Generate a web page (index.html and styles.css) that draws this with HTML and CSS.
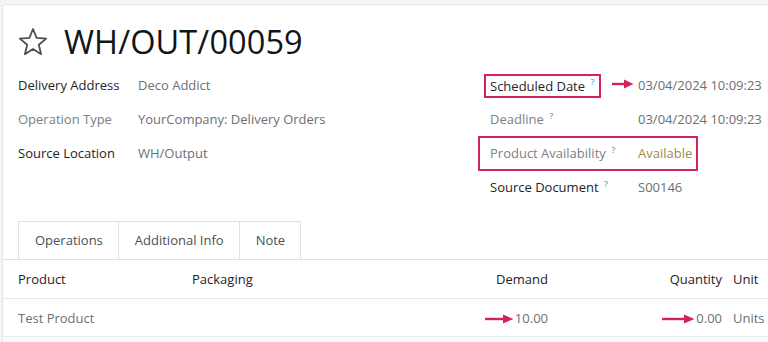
FILE: index.html
```html
<!DOCTYPE html>
<html lang="en">
<head>
    <meta charset="UTF-8">
    <title>WH/OUT/00059</title>
    <link rel="stylesheet" href="styles.css">
</head>
<body>
    <div class="sheet">
        <div class="title-row">
            <svg class="star" width="30" height="29" viewBox="0 0 30 29">
                <path d="M15 2 L18.6 10.9 L28.2 11.6 L20.8 17.8 L23.1 27.2 L15 22.1 L6.9 27.2 L9.2 17.8 L1.8 11.6 L11.4 10.9 Z" fill="none" stroke="#4b5057" stroke-width="1.8" stroke-linejoin="round"/>
            </svg>
            <h1>WH/OUT/00059</h1>
        </div>

        <div class="fields">
            <div class="group left">
                <div class="field">
                    <span class="label">Delivery Address</span>
                    <span class="value">Deco Addict</span>
                </div>
                <div class="field">
                    <span class="label muted">Operation Type</span>
                    <span class="value">YourCompany: Delivery Orders</span>
                </div>
                <div class="field">
                    <span class="label">Source Location</span>
                    <span class="value">WH/Output</span>
                </div>
            </div>
            <div class="group right">
                <div class="field">
                    <span class="label"><span class="boxed">Scheduled Date <sup>?</sup></span></span>
                    <span class="value arrowed">
                        <svg class="arrow side" width="22" height="10" viewBox="0 0 22 10"><path d="M0 5 H14" stroke="#d1245f" stroke-width="2.4"/><path d="M12 0.5 L21.5 5 L12 9.5 Z" fill="#d1245f"/></svg>
                        03/04/2024 10:09:23
                    </span>
                </div>
                <div class="field">
                    <span class="label muted">Deadline <sup>?</sup></span>
                    <span class="value">03/04/2024 10:09:23</span>
                </div>
                <div class="field marked">
                    <span class="label muted">Product Availability <sup>?</sup></span>
                    <span class="value gold">Available</span>
                </div>
                <div class="field">
                    <span class="label">Source Document <sup>?</sup></span>
                    <span class="value">S00146</span>
                </div>
            </div>
        </div>

        <div class="tabs">
            <div class="tab active">Operations</div>
            <div class="tab">Additional Info</div>
            <div class="tab">Note</div>
        </div>

        <table class="moves">
            <colgroup>
                <col style="width: 181px">
                <col style="width: 256px">
                <col style="width: 116px">
                <col style="width: 171px">
                <col style="width: 60px">
            </colgroup>
            <thead>
                <tr>
                    <th class="first">Product</th>
                    <th>Packaging</th>
                    <th class="num">Demand</th>
                    <th class="num qty">Quantity</th>
                    <th class="unit">Unit</th>
                </tr>
            </thead>
            <tbody>
                <tr>
                    <td class="first">Test Product</td>
                    <td></td>
                    <td class="num"><svg class="arrow" width="29" height="10" viewBox="0 0 29 10"><path d="M0 5 H20" stroke="#d1245f" stroke-width="2.4"/><path d="M18 0.5 L28.5 5 L18 9.5 Z" fill="#d1245f"/></svg>10.00</td>
                    <td class="num qty"><svg class="arrow" width="33" height="10" viewBox="0 0 33 10"><path d="M0 5 H24" stroke="#d1245f" stroke-width="2.4"/><path d="M22 0.5 L32.5 5 L22 9.5 Z" fill="#d1245f"/></svg>0.00</td>
                    <td class="unit">Units</td>
                </tr>
                <tr class="blank">
                    <td colspan="5"></td>
                </tr>
            </tbody>
        </table>
    </div>
</body>
</html>
```

FILE: styles.css
```css
body {
    margin: 0;
    background-color: #f4f5f7;
    font-family: "Open Sans", "Noto Sans", sans-serif;
    font-size: 13px;
    color: #212529;
    overflow: hidden;
    height: 342px;
}

.sheet {
    margin: 4px 0 0 2px;
    width: 800px;
    background-color: #fff;
    border: 1px solid #e3e5e8;
    border-right: none;
    border-radius: 4px 0 0 0;
}

.title-row {
    display: flex;
    align-items: center;
    gap: 16px;
    padding: 16px 15px 0 15px;
    height: 40px;
}

.star {
    margin-top: 1px;
}

h1 {
    margin: 0;
    font-size: 32.5px;
    font-weight: 500;
    color: #111418;
    letter-spacing: 0.1px;
}

.fields {
    display: flex;
    padding: 7px 0 0 15px;
}

.group.left {
    width: 472px;
}

.field {
    display: flex;
    align-items: center;
    height: 34px;
    position: relative;
}

.left .label {
    width: 120px;
}

.right .label {
    width: 148px;
}

.label {
    font-weight: 500;
    color: #1f2327;
    flex-shrink: 0;
}

.label.muted {
    color: #7b8085;
}

.value {
    color: #6b7075;
    position: relative;
}

.gold {
    color: #a58a45;
}

sup {
    color: #6ea6c9;
    font-size: 9px;
    font-weight: 600;
    margin-left: 2px;
}

.boxed {
    border: 2px solid #d1245f;
    padding: 1px 4px;
    margin-left: -6px;
}

.arrow.side {
    position: absolute;
    left: -26px;
    top: 3px;
}

.marked::after {
    content: "";
    position: absolute;
    left: -12px;
    top: 0;
    width: 216px;
    height: 31px;
    border: 2px solid #d1245f;
}

.tabs {
    display: flex;
    margin-top: 17px;
    padding-left: 15px;
    border-bottom: 1px solid #dee2e6;
}

.tab {
    padding: 0 15px 0 16px;
    height: 37px;
    line-height: 37px;
    color: #495057;
    border: 1px solid #dee2e6;
    border-bottom: none;
    border-left: none;
}

.tab.active {
    border-left: 1px solid #dee2e6;
}

.moves {
    border-collapse: collapse;
    table-layout: fixed;
    width: 784px;
}

th, td {
    padding: 0 8px;
    text-align: left;
    border-bottom: 1px solid #e6e8ea;
    white-space: nowrap;
}

th {
    height: 38px;
    font-weight: 500;
    color: #1f2327;
}

td {
    height: 37px;
    color: #6b7075;
}

.first {
    padding-left: 15px;
}

.num {
    text-align: right;
}

.qty {
    padding-right: 5px;
}

.unit {
    padding-left: 6px;
}

.arrow {
    vertical-align: -1px;
    margin-right: 1px;
}

.blank td {
    height: 20px;
    background-color: #fafafa;
    border-bottom: none;
}
```
